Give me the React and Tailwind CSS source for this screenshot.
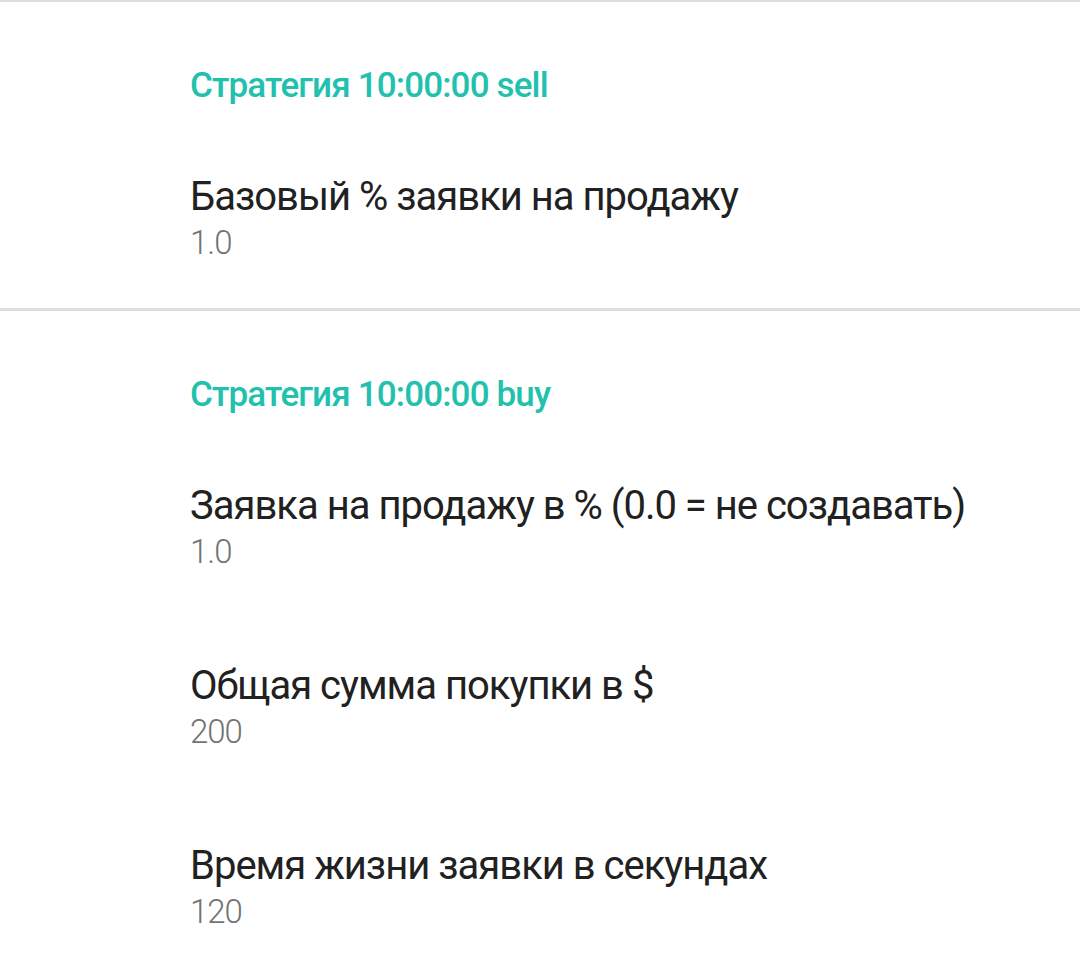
import React from "react";

const Category = ({ title }) => (
  <div className="pl-[190px] pt-[62px] pb-[20px]">
    <div className="text-[35px] leading-[44px] font-medium text-[#22c1ad] tracking-[-0.85px]">
      {title}
    </div>
  </div>
);

const Pref = ({ title, summary }) => (
  <div className="pl-[190px] py-[45px]">
    <div className="text-[40px] leading-[48px] text-[#212121] tracking-[-1px]">{title}</div>
    <div className="text-[33px] leading-[40px] mt-[2px] font-light text-[#737373] tracking-[-1px]">
      {summary}
    </div>
  </div>
);

export default function App() {
  return (
    <div
      className="w-[1080px] h-[970px] bg-white overflow-hidden"
      style={{ fontFamily: "Roboto, 'Liberation Sans', sans-serif" }}
    >
      <div className="h-[2px] bg-[#dedede]"></div>
      <Category title="Стратегия 10:00:00 sell" />
      <Pref title="Базовый % заявки на продажу" summary="1.0" />
      <div className="h-[3px] bg-[#dedede]"></div>
      <Category title="Стратегия 10:00:00 buy" />
      <Pref title="Заявка на продажу в % (0.0 = не создавать)" summary="1.0" />
      <Pref title="Общая сумма покупки в $" summary="200" />
      <Pref title="Время жизни заявки в секундах" summary="120" />
    </div>
  );
}
